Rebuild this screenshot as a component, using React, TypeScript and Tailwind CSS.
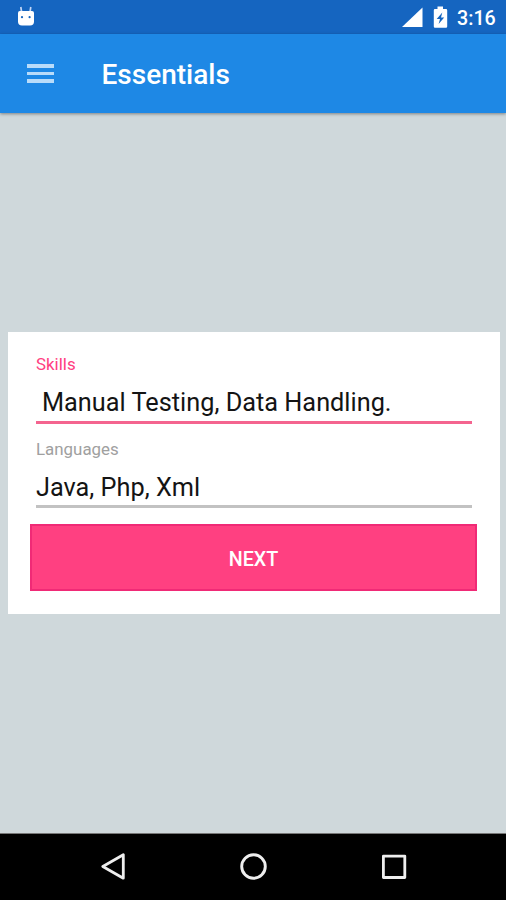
function StatusBar() {
  return (
    <div className="flex h-[34px] shrink-0 items-center bg-[#1565c0] text-white">
      <svg className="ml-[17px] h-[22px] w-[18px]" viewBox="0 0 18 22" fill="white">
        <path d="M3.8 1 4.6 6M13.8 1 13 6" stroke="#c3d6f5" strokeWidth="1.7" />
        <path d="M2.8 5H15Q17 5 17 7V15.5Q17 19.5 13 19.5H5Q1 19.5 1 15.5V7Q1 5 2.8 5Z" />
        <circle cx="5" cy="11.2" r="1.1" fill="#1565c0" />
        <circle cx="12.6" cy="11.2" r="1.1" fill="#1565c0" />
      </svg>
      <svg className="ml-auto h-[22px] w-[22px]" viewBox="0 0 22 22" fill="white">
        <path d="M1 21 21.5 1.5V21Z" />
      </svg>
      <svg className="ml-[10px] h-[22px] w-[15px]" viewBox="0 0 15 22" fill="none">
        <path d="M4.5.5H10V3H13Q14.2 3 14.2 4.2V20.5Q14.2 21.7 13 21.7H2Q.8 21.7.8 20.5V4.2Q.8 3 2 3H4.5Z" fill="white" />
        <path d="M9.3 6.5 3.7 13H7L5.6 18 11.2 11.5H8Z" fill="#1565c0" />
      </svg>
      <span className="mr-[10px] ml-[9px] w-[39px] pt-[3px] text-[19.7px] leading-[31px] font-medium whitespace-nowrap">3:16</span>
    </div>
  );
}

function Toolbar() {
  return (
    <header className="z-10 flex h-[79px] shrink-0 items-center bg-[#1e88e5] shadow-[0_1px_3px_rgba(0,0,0,0.4)]">
      <button aria-label="Menu" className="ml-[26.5px] flex w-[27px] flex-col gap-[4px]">
        <span className="h-[3.5px] bg-[#b9dcfa]" />
        <span className="h-[3.5px] bg-[#b9dcfa]" />
        <span className="h-[3.5px] bg-[#b9dcfa]" />
      </button>
      <h1 className="ml-[48px] pt-[3px] text-[28px] leading-[40px] font-medium text-white">Essentials</h1>
    </header>
  );
}

function EssentialsForm() {
  return (
    <section className="mt-[219px] mr-[6px] ml-[8px] h-[282px] bg-white px-[22px] pt-[22px]">
      <div className="px-[6px]">
        <div className="h-5 text-[16.9px] leading-5 text-[#ff4081]">Skills</div>
        <div className="mt-[12px] h-[38px] border-b-[3px] border-[#f4648f] pl-[6px] text-[25.3px] leading-[34px] whitespace-nowrap text-[#141414]">
          Manual Testing, Data Handling.
        </div>
        <div className="mt-[15px] h-5 text-[16.9px] leading-5 text-[#a0a0a0]">Languages</div>
        <div className="mt-[12px] h-[37px] border-b-[3px] border-[#c2c2c2] text-[25.3px] leading-[34px] whitespace-nowrap text-[#141414]">
          Java, Php, Xml
        </div>
      </div>
      <button className="mt-4 flex h-[67px] w-[447px] items-center justify-center border-2 border-[#f02a76] bg-[#ff4081] pt-[4px] text-[19.7px] font-medium text-white">
        NEXT
      </button>
    </section>
  );
}

function NavigationBar() {
  return (
    <nav className="flex h-[67px] shrink-0 items-center justify-between border-t border-[#777] bg-black pr-[98px] pl-[100px]">
      <svg className="h-7 w-7" viewBox="0 0 28 28" fill="none" stroke="#eee" strokeWidth="2.8" strokeLinejoin="round">
        <path d="M2.8 13.5 23.3 1.8V25.2Z" />
      </svg>
      <svg className="h-7 w-7" viewBox="0 0 28 28" fill="none" stroke="#eee" strokeWidth="2.9">
        <circle cx="13.5" cy="13.5" r="11.8" />
      </svg>
      <svg className="h-7 w-7" viewBox="0 0 28 28" fill="none" stroke="#eee" strokeWidth="2.8" strokeLinejoin="round">
        <path d="M3.4 3.1H24.8V24.5H3.4Z" />
      </svg>
    </nav>
  );
}

export default function App() {
  return (
    <div className="flex h-[900px] w-[506px] flex-col overflow-hidden bg-[#cfd8db] font-['Roboto',sans-serif]">
      <StatusBar />
      <Toolbar />
      <main className="flex-1">
        <EssentialsForm />
      </main>
      <NavigationBar />
    </div>
  );
}
